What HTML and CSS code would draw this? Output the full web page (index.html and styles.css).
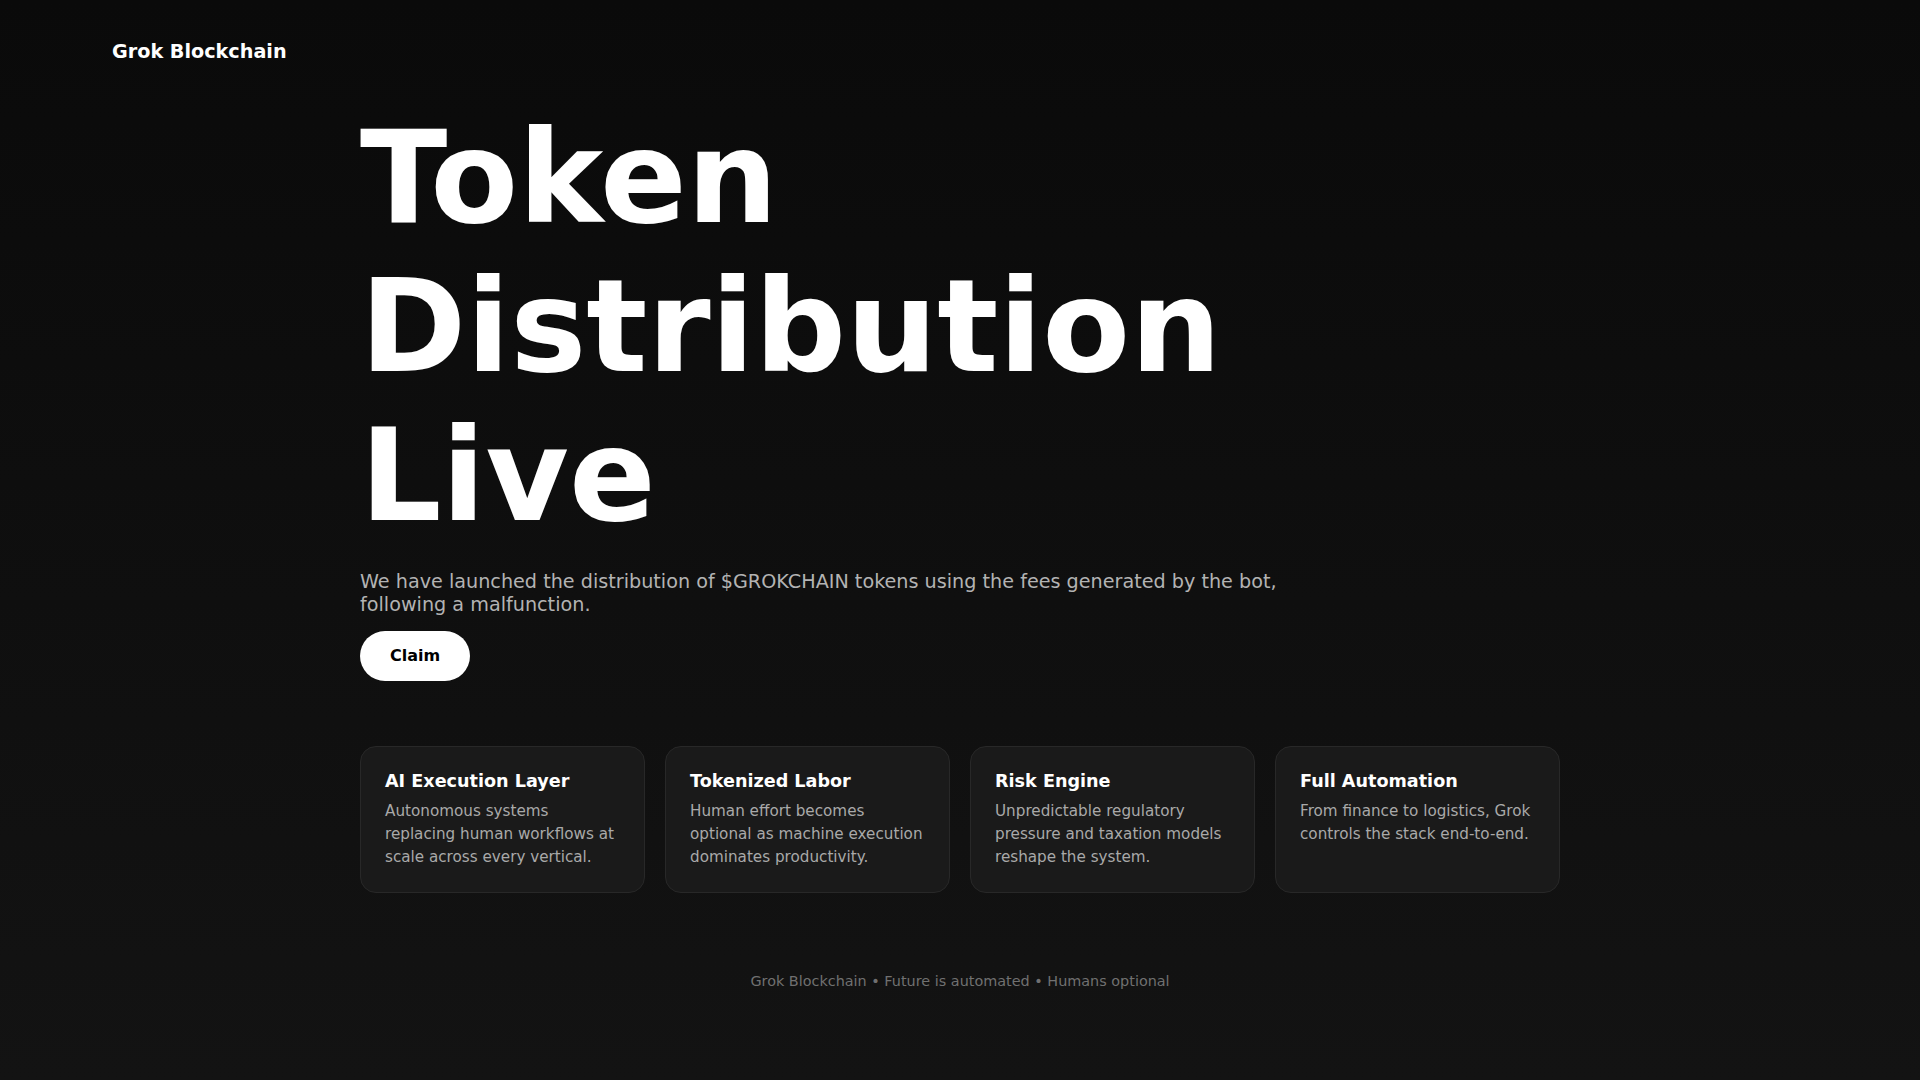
FILE: index.html
```html
<!DOCTYPE html>
<html lang="en">
<head>
<meta charset="utf-8">
<title>Grok Blockchain</title>
<link rel="stylesheet" href="styles.css">
</head>
<body>
<header class="nav">
  <div class="logo">Grok Blockchain</div>
</header>
<main class="container">
  <section class="hero">
    <h1 class="title">Token<br>Distribution<br>Live</h1>
    <p class="lead">We have launched the distribution of $GROKCHAIN tokens using the fees generated by the bot, following a malfunction.</p>
    <button class="claim">Claim</button>
  </section>
  <section class="cards">
    <div class="card">
      <h3 class="card-title">AI Execution Layer</h3>
      <p class="card-text">Autonomous systems replacing human workflows at scale across every vertical.</p>
    </div>
    <div class="card">
      <h3 class="card-title">Tokenized Labor</h3>
      <p class="card-text">Human effort becomes optional as machine execution dominates productivity.</p>
    </div>
    <div class="card">
      <h3 class="card-title">Risk Engine</h3>
      <p class="card-text">Unpredictable regulatory pressure and taxation models reshape the system.</p>
    </div>
    <div class="card">
      <h3 class="card-title">Full Automation</h3>
      <p class="card-text">From finance to logistics, Grok controls the stack end-to-end.</p>
    </div>
  </section>
  <footer class="footer">Grok Blockchain • Future is automated • Humans optional</footer>
</main>
</body>
</html>
```
FILE: styles.css
```css
* { box-sizing: border-box; }
html, body { margin: 0; padding: 0; }
body {
  min-height: 1080px;
  background: linear-gradient(180deg, #0a0a0a 0%, #131313 100%);
  color: #fff;
  font-family: "DejaVu Sans", sans-serif;
}
.nav {
  padding: 40px 112px 0;
}
.logo {
  font-size: 19.2px;
  font-weight: 700;
  line-height: 23px;
}
.container {
  width: 1200px;
  margin: 0 auto;
}
.hero {
  padding-top: 40px;
}
.title {
  margin: 0;
  font-size: 128px;
  font-weight: 700;
  line-height: normal;
}
.lead {
  margin: 20px 0 0;
  max-width: 950px;
  font-size: 19.2px;
  line-height: 23.3px;
  color: #b3b3b3;
}
.claim {
  margin-top: 14px;
  padding: 0 30px;
  height: 50px;
  border: 0;
  border-radius: 999px;
  background: #fff;
  color: #000;
  font-family: "DejaVu Sans", sans-serif;
  font-size: 16px;
  font-weight: 700;
}
.cards {
  display: grid;
  grid-template-columns: repeat(4, 1fr);
  gap: 20px;
  margin-top: 65px;
}
.card {
  background: #1a1a1a;
  border: 1px solid #282828;
  border-radius: 16px;
  padding: 24px 24px 23px;
  min-height: 147px;
}
.card-title {
  margin: 0;
  font-size: 17.6px;
  font-weight: 700;
  line-height: 21px;
}
.card-text {
  margin: 8px 0 0;
  font-size: 15.2px;
  line-height: 23.3px;
  color: #a9a9a9;
}
.footer {
  margin-top: 78px;
  text-align: center;
  font-size: 14.4px;
  line-height: 21px;
  color: #707070;
}
```
